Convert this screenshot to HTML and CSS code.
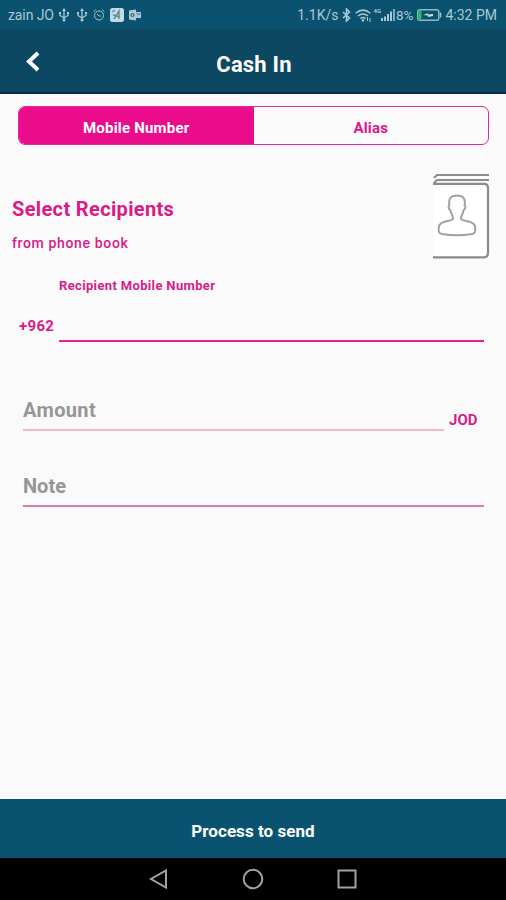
FILE: index.html
```html
<!DOCTYPE html>
<html lang="en">
<head>
<meta charset="utf-8">
<title>Cash In</title>
<link rel="stylesheet" href="styles.css">
</head>
<body>
<div class="screen">
  <div class="status">
    <span class="carrier">zain JO</span>
    <svg class="usb" width="12" height="14" viewBox="0 0 12 14"><path d="M6 12V2M2 5v2.500L6 10l4-2.500V5" fill="none" stroke="currentColor" stroke-width="1.300"/><path d="M6 0l2 3H4z" fill="currentColor"/><circle cx="6" cy="12" r="1.500" fill="currentColor"/><path d="M1 4h2v2H1zM9 4h2v2H9z" fill="currentColor"/></svg>
    <svg class="usb second" width="12" height="14" viewBox="0 0 12 14"><path d="M6 12V2M2 5v2.500L6 10l4-2.500V5" fill="none" stroke="currentColor" stroke-width="1.300"/><path d="M6 0l2 3H4z" fill="currentColor"/><circle cx="6" cy="12" r="1.500" fill="currentColor"/><path d="M1 4h2v2H1zM9 4h2v2H9z" fill="currentColor"/></svg>
    <svg class="alarm" width="12" height="12" viewBox="0 0 12 12" fill="none" stroke="currentColor" stroke-width="1"><circle cx="6" cy="6.500" r="4.500"/><path d="M4 5l2 2h2M.7 2.700L2.700.8M11.300 2.700L9.300.8"/></svg>
    <svg class="app" width="14" height="14" viewBox="0 0 14 14"><rect width="14" height="14" rx="2.500" fill="#c6dbe1"/><path d="M4 11l5-8v8M3 7l7 2M2 4l3-2" fill="none" stroke="#5593aa" stroke-width="1.500"/></svg>
    <svg class="outlook" width="12" height="12" viewBox="0 0 12 12"><path d="M0 1.500L7 .5v11l-7-1z" fill="currentColor"/><path d="M7 3h5v6H7z" fill="currentColor"/><circle cx="3.500" cy="6" r="1.500" fill="none" stroke="#0a5270"/><path d="M7.500 4l2 2 2-2" fill="none" stroke="#0a5270" stroke-width=".8"/></svg>
    <span class="rate">1.1K/s</span>
    <svg class="bt" width="9" height="14" viewBox="0 0 9 14"><path d="M1 4l6.500 6L4.500 13V1l3 3L1 10" fill="none" stroke="currentColor" stroke-width="1.600"/></svg>
    <svg class="wifi" width="16" height="13" viewBox="0 0 16 13" fill="none" stroke="currentColor" stroke-width="1.500"><path d="M.7 4.200Q8-2 15.300 4.200M3 7q5-4 10 0M5.300 9.500q2.700-2 5.400 0"/><circle cx="8" cy="11.300" r=".6"/><path d="M12.500 8v4M15 9v4" stroke-width="1"/></svg>
    <span class="net">4G</span>
    <svg class="signal" width="15" height="12" viewBox="0 0 15 12" fill="currentColor"><path d="M0 9h2v3H0zM3 7.500h2V12H3zM6 5h2v7H6zM9 2.500h2V12H9z"/><path d="M12 0h2v12h-2z" opacity=".75"/></svg>
    <span class="percent">8%</span>
    <svg class="battery" width="25" height="12" viewBox="0 0 25 12"><rect x=".75" y=".75" width="21" height="10.500" rx="2" fill="none" stroke="#93b9b9" stroke-width="1.400"/><path d="M1.500 1.500h3v9h-3z" fill="#21bf66"/><path d="M6 6l5-1.700V5.500L16 5v2l-5 1V6.500z" fill="#cce0e4"/><path d="M23.500 3.500v5" stroke="#a4c1c9" stroke-width="1.500"/></svg>
    <span class="clock">4:32 PM</span>
  </div>
  <header class="header">
    <svg class="back" width="16" height="24" viewBox="0 0 16 24"><path d="M13 3L4 11.500l9 8.500" fill="none" stroke="#fff" stroke-width="4"/></svg>
    <h1 class="title">Cash In</h1>
  </header>
  <main class="main">
    <div class="tabs">
      <div class="tab active"><span>Mobile Number</span></div>
      <div class="tab"><span>Alias</span></div>
    </div>
    <section class="contacts">
      <div class="pick">
        <h2 class="pick-title">Select Recipients</h2>
        <div class="pick-sub">from phone book</div>
      </div>
      <svg class="book" width="57" height="86" viewBox="0 0 57 86" fill="none" stroke="#8b8b8b"><path d="M0 11h51q4 0 4 4v65q0 4-4 4H0z" fill="#fff" stroke="none"/><path d="M1 5l3-3h52M1 10l3-3h52" stroke-width="2"/><path d="M0 10.800h51q4 0 4 4v65q0 4.500-4 4.500H0" stroke-width="2.200"/><path d="M20 46c.3-4-2-4.500-2.700-9-1.800-.8-2.300-3.500-1-4.500C15.500 25 18 22.500 24 22.500s8.500 2.500 7.700 10c1.300 1 .8 3.700-1 4.500-.7 4.500-3 5-2.700 9 2 2.500 13 1.500 14 7q.6 3 0 6-.5 1.500-3 2-15 2.500-30 0-2.500-.5-3-2-.8-3 0-6c1-5.500 12-4.500 14-7z" stroke-width="2" stroke="#a0a0a0"/></svg>
    </section>
    <section class="phone">
      <div class="prefix"><span>+962</span></div>
      <div class="number"><span>Recipient Mobile Number</span></div>
    </section>
    <section class="amount">
      <div class="field amount-field"><span>Amount</span></div>
      <div class="currency"><span>JOD</span></div>
    </section>
    <section class="field note-field"><span>Note</span></section>
  </main>
  <div class="send"><span>Process to send</span></div>
  <nav class="nav">
    <svg width="22" height="22" viewBox="0 0 22 22"><path d="M18 2.500v17L3 11z"/></svg>
    <svg width="22" height="22" viewBox="0 0 22 22"><circle cx="11" cy="11" r="9.300"/></svg>
    <svg width="22" height="22" viewBox="0 0 22 22"><rect x="2.500" y="2.500" width="17" height="17"/></svg>
  </nav>
</div>
</body>
</html>
```

FILE: styles.css
```css
* { box-sizing: border-box; }
body { margin: 0; font-family: Roboto, "Liberation Sans", sans-serif; }
h1, h2 { margin: 0; }
svg { display: block; flex: none; }
span { white-space: nowrap; }
.screen { width: 506px; height: 900px; display: flex; flex-direction: column; overflow: hidden; background: #fafafa; }
.status { height: 29px; flex: none; display: flex; align-items: center; padding: 1px 9px 0 8px; background: #0a5270; color: #a9c9d3; font-size: 14px; }
.carrier { width: 50px; letter-spacing: -.1px; }
.second { margin-left: 6px; }
.alarm { margin-left: 5px; }
.app { margin-left: 5px; }
.outlook { margin-left: 5px; }
.rate { margin-left: auto; }
.bt { margin-left: 4px; }
.wifi { margin-left: 4px; }
.net { margin-left: 2px; font-size: 6px; font-weight: 700; align-self: flex-start; margin-top: 6px; }
.signal { margin-left: 0; }
.percent { margin-left: 0; font-size: 13.5px; }
.battery { margin-left: 4px; }
.clock { margin-left: 3px; }
.header { height: 65px; flex: none; display: flex; align-items: center; padding: 0 24px 0 25px; background: #0d4862; border-bottom: 2px solid #042c51; }
.back { margin-top: 2px; }
.title { flex: 1; padding: 8px 0 0 0; margin-right: 15px; text-align: center; color: #fff; font-size: 22px; font-weight: 700; line-height: 28px; letter-spacing: .2px; }
.main { flex: 1; }
.tabs { display: flex; height: 39px; margin: 12px 17px 0 18px; border: 1.500px solid #df2a95; border-radius: 7px; overflow: hidden; }
.tab { flex: 1; display: flex; justify-content: center; align-items: center; padding-top: 4px; color: #dc178a; font-size: 15px; font-weight: 700; letter-spacing: .2px; }
.active { background: #eb0c8c; color: #fff; }
.contacts { display: flex; justify-content: space-between; height: 86px; margin: 28px 16px 0 12px; color: #d91b88; }
.pick-title { margin-top: 24px; font-size: 20px; line-height: 24px; font-weight: 700; letter-spacing: .35px; }
.pick-sub { margin-top: 13px; font-size: 14px; line-height: 18px; font-weight: 500; letter-spacing: .65px; }
.phone { display: flex; height: 83px; margin: 0 22px 0 19px; color: #d91b88; font-weight: 700; }
.prefix { width: 40px; padding-top: 57px; font-size: 15px; line-height: 20px; letter-spacing: .3px; }
.number { flex: 1; padding-top: 18px; font-size: 13px; line-height: 18px; letter-spacing: .35px; border-bottom: 2px solid #e72097; }
.amount { display: flex; margin: 55px 22px 0 23px; height: 34px; }
.field { font-size: 20px; line-height: 26px; font-weight: 700; color: #969696; letter-spacing: .35px; }
.amount-field { width: 421px; border-bottom: 2px solid #eeb9cd; }
.currency { padding: 13px 0 0 5px; color: #d91b88; font-size: 15px; line-height: 20px; font-weight: 700; }
.note-field { margin: 42px 22px 0 23px; height: 34px; letter-spacing: 0; border-bottom: 2px solid #df79b2; }
.send { height: 59px; flex: none; display: flex; align-items: center; justify-content: center; padding-top: 4px; background: #095371; border-top: 1px solid #075073; color: #fff; font-size: 17px; font-weight: 700; letter-spacing: .05px; }
.nav { height: 42px; flex: none; display: flex; justify-content: center; align-items: center; gap: 72px; background: #000; }
.nav svg { fill: none; stroke: #a3a3a3; stroke-width: 2; }
```
